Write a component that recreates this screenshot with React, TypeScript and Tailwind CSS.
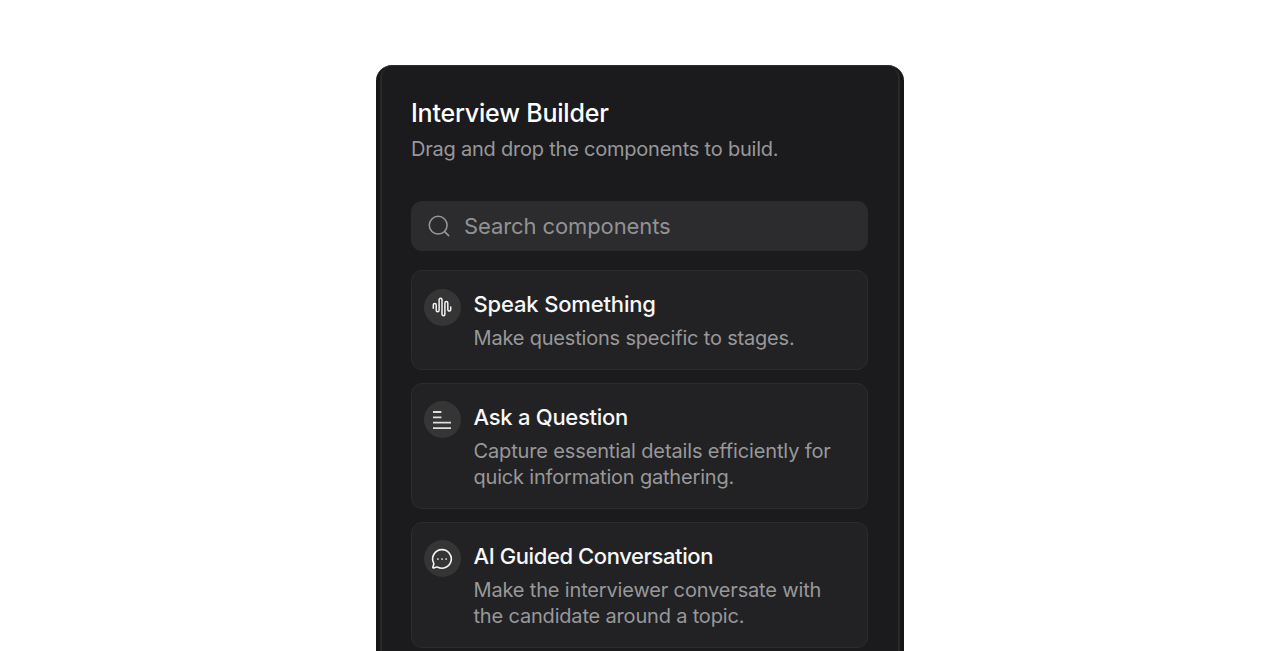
import type { ReactNode } from 'react'

type Component = {
  title: string
  titleClass: string
  lines: { text: string; className: string }[]
  icon: ReactNode
}

const WaveIcon = () => (
  <svg width="20" height="20" viewBox="0 0 20 20" fill="none" stroke="#f4f4f5" strokeWidth="1.5" strokeLinecap="round">
    <path d="M1.3 11.2V7.9a1.45 1.45 0 0 1 2.9 0v5.4a1.45 1.45 0 0 0 2.9 0V2.7a1.45 1.45 0 0 1 2.9 0v14.5a1.45 1.45 0 0 0 2.9 0V6a1.45 1.45 0 0 1 2.9 0v6.6a1.45 1.45 0 0 0 2.9 0V10" />
  </svg>
)

const LinesIcon = () => (
  <svg width="20" height="20" viewBox="0 0 20 20" fill="none" stroke="#dededf" strokeWidth="1.8">
    <path d="M1 2h8.4M1 7.3h8.4M1 12.6h18M1 18.1h18" />
  </svg>
)

const ChatIcon = () => (
  <svg width="22" height="22" viewBox="0 0 22 22" fill="none" stroke="#f4f4f5" strokeWidth="1.6" strokeLinecap="round" strokeLinejoin="round">
    <path d="M11 1.6a9.3 9.3 0 1 1-4.2 17.6c-.5-.2-.9-.3-1.4-.1l-2.6.8c-.6.2-1.1-.4-.9-1l.8-2.5c.2-.5.1-1-.1-1.4A9.3 9.3 0 0 1 11 1.6Z" />
    <path d="M6.8 11h.1M11 11h.1M15.1 11h.1" strokeWidth="1.7" />
  </svg>
)

const SearchIcon = () => (
  <svg width="22" height="22" viewBox="0 0 22 22" fill="none" stroke="#98989b" strokeWidth="1.5" strokeLinecap="round">
    <circle cx="10.2" cy="10.2" r="8.9" />
    <path d="m16.6 16.6 4 4" />
  </svg>
)

const components: Component[] = [
  {
    title: 'Speak Something',
    titleClass: 'tracking-[-0.16px]',
    lines: [{ text: 'Make questions specific to stages.', className: 'tracking-[-0.19px]' }],
    icon: <WaveIcon />,
  },
  {
    title: 'Ask a Question',
    titleClass: 'tracking-[-0.27px]',
    lines: [
      { text: 'Capture essential details efficiently for', className: 'tracking-[-0.14px]' },
      { text: 'quick information gathering.', className: 'tracking-[-0.19px]' },
    ],
    icon: <LinesIcon />,
  },
  {
    title: 'AI Guided Conversation',
    titleClass: 'tracking-[-0.41px]',
    lines: [
      { text: 'Make the interviewer conversate with', className: 'tracking-[-0.16px]' },
      { text: 'the candidate around a topic.', className: 'tracking-[-0.18px]' },
    ],
    icon: <ChatIcon />,
  },
]

function ComponentCard({ title, titleClass, lines, icon }: Component) {
  return (
    <div className="flex gap-[13px] rounded-[11px] border border-[#2c2c2e] bg-[#222224] pt-[17px] pb-[17px] pl-[11.5px]">
      <div className="mt-[0.5px] flex size-[37px] shrink-0 items-center justify-center rounded-full bg-[#353536]">{icon}</div>
      <div className="whitespace-nowrap">
        <h2 className={`text-[22px] leading-[32px] font-medium text-[#f7f7f8] ${titleClass}`}>{title}</h2>
        <div className="mt-[5px] text-[20px] leading-[26.5px] text-[#98989a]">
          {lines.map((line) => (
            <p key={line.text} className={line.className}>
              {line.text}
            </p>
          ))}
        </div>
      </div>
    </div>
  )
}

export default function App() {
  return (
    <main className="flex h-[651px] justify-center overflow-hidden bg-white pt-[65px] font-['Inter',sans-serif]">
      <div className="h-[640px] w-[528px] shrink-0 rounded-[16px] border-t border-[#2b2d30] bg-[#161617] px-[4px]">
        <div className="h-full rounded-t-[13px] border-x-2 border-[#29292b] bg-[#1b1b1d] px-[29px] pt-[30px]">
          <h1 className="text-[25px] leading-[34px] font-medium tracking-[-0.2px] text-white">Interview Builder</h1>
          <p className="mt-[5px] text-[20px] leading-[28px] tracking-[-0.22px] text-[#98989a]">Drag and drop the components to build.</p>

          <div className="mt-[38px] flex h-[50px] w-[457px] items-center gap-[14px] rounded-[11px] bg-[#2c2c2e] pl-[17px]">
            <SearchIcon />
            <span className="text-[22px] tracking-[-0.1px] text-[#929295]">Search components</span>
          </div>

          <div className="mt-[19px] flex w-[457px] flex-col gap-[13px]">
            {components.map((item) => (
              <ComponentCard key={item.title} {...item} />
            ))}
          </div>
        </div>
      </div>
    </main>
  )
}
